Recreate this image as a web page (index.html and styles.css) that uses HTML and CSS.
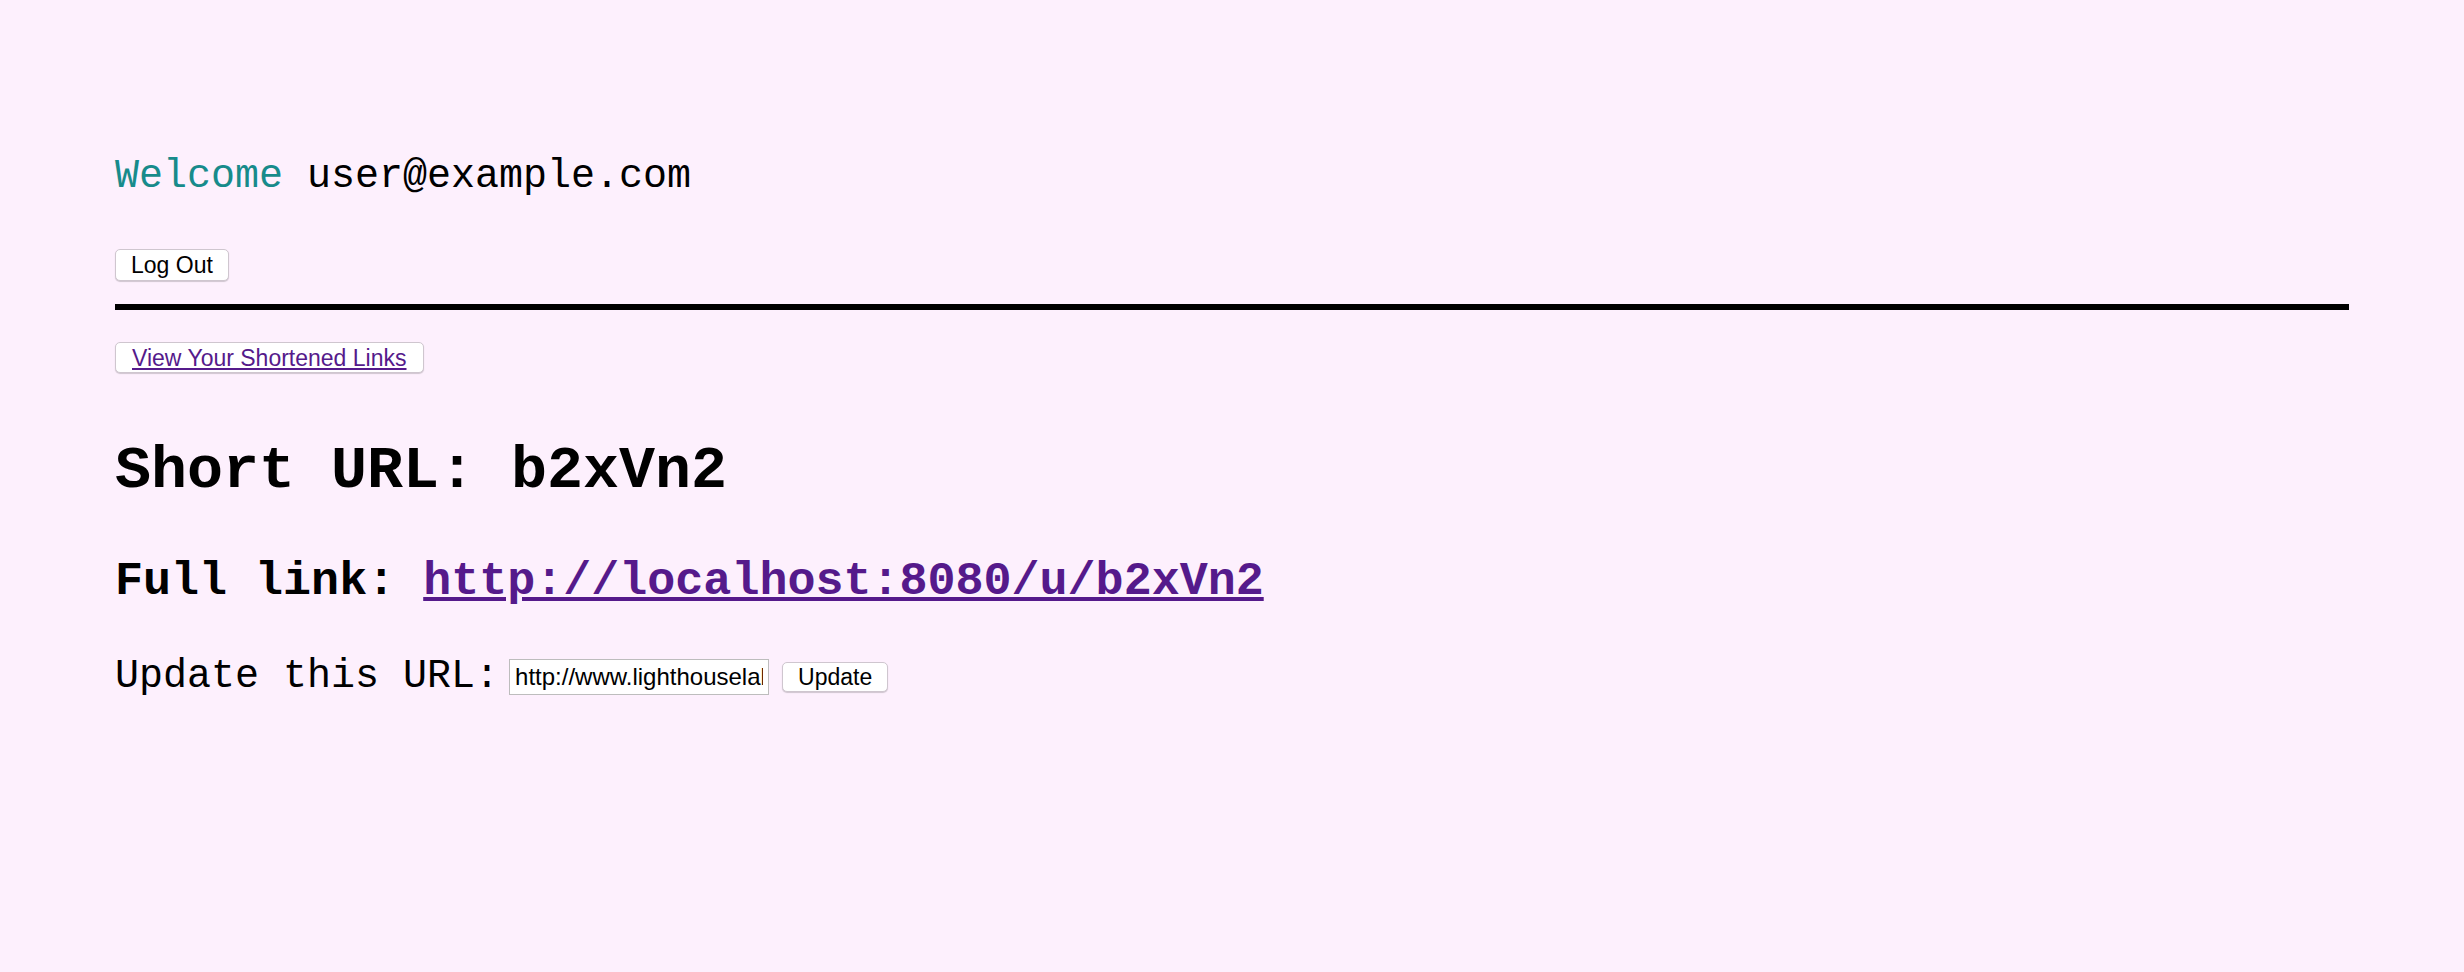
FILE: index.html
```html
<!DOCTYPE html>
<html>
<head>
<meta charset="utf-8">
<link rel="stylesheet" href="styles.css">
</head>
<body>
<div class="page">
  <header class="top">
    <h3 class="welcome"><span class="hello">Welcome</span> user@example.com</h3>
    <form class="logout"><button type="button" class="btn">Log Out</button></form>
  </header>
  <hr class="rule">
  <main class="content">
    <form class="links"><button type="button" class="btn"><a href="#" class="btn-link">View Your Shortened Links</a></button></form>
    <h1 class="short">Short URL: b2xVn2</h1>
    <h2 class="full">Full link: <a href="#" class="full-link">http://localhost:8080/u/b2xVn2</a></h2>
    <form class="update">
      <label class="update-label">Update this URL:</label>
      <input class="url-input" type="text" value="http://www.lighthouselabs.ca">
      <button type="button" class="btn">Update</button>
    </form>
  </main>
</div>
</body>
</html>
```
FILE: styles.css
```css
html, body {
  margin: 0;
  padding: 0;
  background: #fdf0fd;
}
.page {
  padding: 157px 115px 0 115px;
  font-family: "Liberation Mono", "Courier New", monospace;
  color: #000;
}
.top {
  display: flex;
  flex-direction: column;
  align-items: flex-start;
}
.welcome {
  margin: 0;
  font-size: 40px;
  line-height: 40px;
  font-weight: normal;
}
.hello {
  color: #178b8b;
}
.logout {
  margin: 52px 0 0 0;
}
.btn {
  box-sizing: border-box;
  height: 32px;
  padding: 0 15px;
  background: #fff;
  border: 1px solid #cfc6cf;
  border-radius: 5px;
  box-shadow: 0 1px 1px rgba(0,0,0,0.18);
  font-family: "Liberation Sans", Arial, sans-serif;
  font-size: 23px;
  color: #000;
  line-height: 30px;
}
.rule {
  margin: 23px 0 0 0;
  height: 6px;
  border: 0;
  background: #000;
}
.content {
  display: flex;
  flex-direction: column;
  align-items: flex-start;
}
.links {
  margin: 32px 0 0 0;
}
.links .btn {
  height: 31px;
  padding: 0 16px;
}
.btn-link {
  color: #551a8b;
  text-decoration: underline;
}
.short {
  margin: 68px 0 0 0;
  font-size: 60px;
  line-height: 60px;
  font-weight: bold;
}
.full {
  margin: 57px 0 0 0;
  font-size: 46.7px;
  line-height: 47px;
  font-weight: bold;
}
.full-link {
  color: #551a8b;
}
.update {
  margin: 52px 0 0 0;
  display: flex;
  align-items: center;
}
.update-label {
  font-size: 40px;
  line-height: 40px;
  margin-right: 10px;
}
.url-input {
  box-sizing: border-box;
  width: 260px;
  height: 36px;
  padding: 0 5px;
  border: 1px solid #bdbdbd;
  background: #fff;
  font-family: "Liberation Sans", Arial, sans-serif;
  font-size: 24px;
  color: #000;
  margin: 0 13px 0 0;
}
.update .btn {
  height: 30px;
  line-height: 28px;
}
```
